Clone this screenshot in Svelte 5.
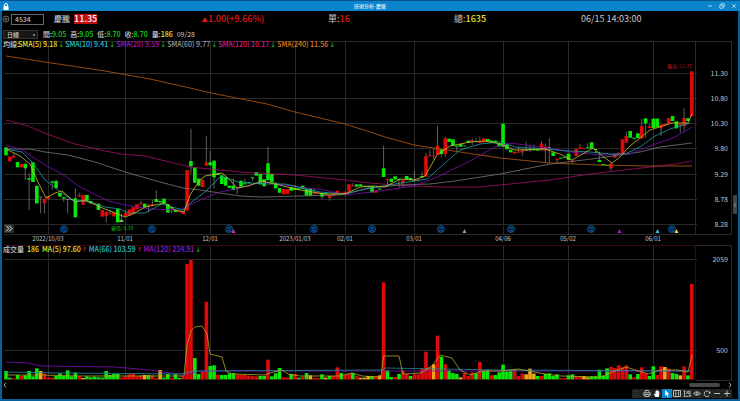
<script lang="ts">
	interface Bar {
		x: number;
		color: string;
		top: number;
		bottom: number;
		high: number;
		low: number;
	}

	let code = $state('4534');
	let period = $state('日線');
	let tool = $state('cursor');

	const STEP = 3.853;
	const COLORS: Record<string, string> = { r: '#e00808', g: '#08e808', y: '#f0a818', w: '#999' };

	// color, body top, body bottom, high, low (thirds of a pixel, 0 = no wick)
	const candleData = `g 292 316 0 0;r 320 334 0 0;r 318 323 310 0;g 336 352 0 0;r 342 352 0 0;g 342 355 338 390;
g 385 389 370 480;g 337 396 0 0;g 408 460 405 0;w 440 442 0 490;r 446 460 0 490;r 438 446 0 450;g 394 398 392 420;
g 393 414 388 416;g 429 440 0 0;g 442 446 0 455;w 447 449 0 490;w 447 449 0 0;g 445 502 415 0;r 436 440 428 0;
r 436 464 0 0;g 435 452 0 0;g 453 460 0 0;r 458 460 0 0;g 461 480 0 0;r 480 500 0 0;r 485 498 0 518;r 490 493 480 0;
r 487 499 0 0;g 477 517 0 0;g 511 516 490 0;r 489 498 480 0;r 478 496 0 0;r 472 492 0 0;r 462 478 0 0;r 460 463 452 0;
g 461 472 0 0;r 463 467 0 487;r 463 467 450 0;g 447 456 420 0;g 453 457 0 0;g 446 460 0 0;g 462 488 0 0;
g 472 475 0 490;g 480 486 0 0;r 484 487 0 0;r 485 492 0 0;r 360 482 0 0;g 333 349 236 370;g 352 398 0 0;g 386 407 0 0;
r 389 411 0 0;r 337 347 258 0;g 337 346 303 0;g 332 382 0 415;g 370 375 0 0;g 376 402 0 0;g 381 407 0 0;g 407 414 0 0;
g 407 420 385 0;r 412 416 0 433;g 392 410 0 0;g 400 403 385 0;g 397 400 0 0;g 382 385 0 392;g 366 377 0 0;g 372 403 0 0;
g 388 409 0 0;g 340 390 291 0;g 372 398 0 0;g 398 415 0 0;g 414 428 0 0;r 417 433 0 0;r 417 432 0 0;g 411 422 0 0;
g 414 420 405 0;g 415 419 0 0;g 407 416 0 0;g 417 437 0 0;g 416 437 0 0;r 430 433 415 0;r 428 432 0 0;g 429 440 0 447;
g 430 433 0 0;r 434 444 0 452;r 431 436 0 0;r 422 431 0 0;r 428 430 0 0;r 425 432 0 0;r 403 424 0 0;r 406 409 400 0;
g 403 410 0 0;g 403 409 0 0;g 407 409 0 0;g 407 409 0 415;g 408 427 0 0;r 421 428 0 0;g 416 419 0 0;g 355 381 287 0;
r 386 389 0 405;g 386 396 0 0;g 379 388 0 0;g 387 390 0 413;r 390 400 0 412;g 378 388 0 0;g 384 390 0 0;w 390 392 362 0;
r 388 390 0 395;g 378 382 365 0;r 319 380 310 0;r 316 319 300 0;r 317 319 296 328;r 287 314 228 0;g 298 312 0 322;
r 265 312 260 320;g 266 276 0 0;g 268 288 0 0;g 287 290 0 303;g 282 290 0 0;g 287 289 0 0;g 272 278 0 0;r 270 275 265 285;
w 273 275 265 0;r 276 279 262 0;r 265 277 0 0;g 267 275 0 0;g 272 276 0 0;g 272 277 0 0;g 280 290 0 0;g 221 290 0 0;
g 283 298 0 0;g 299 307 0 0;r 305 311 0 0;r 305 308 290 0;r 299 307 0 317;w 300 302 275 0;w 299 301 284 305;
g 298 301 284 0;g 298 302 0 0;r 281 301 273 0;r 290 302 280 338;w 292 294 265 338;g 307 318 0 0;r 326 330 0 338;
g 323 326 0 0;g 322 324 0 0;g 311 330 0 0;r 331 336 0 340;r 297 318 0 0;r 292 297 282 0;r 295 297 0 0;g 292 295 280 0;
g 277 296 0 0;g 297 300 0 310;g 330 336 305 0;g 342 346 0 0;g 345 348 0 0;r 340 355 0 362;r 311 323 0 0;r 308 312 0 0;
r 268 311 0 0;r 258 278 245 0;g 243 263 0 0;g 263 266 0 0;g 250 264 0 0;r 228 265 207 0;g 205 220 0 263;r 229 234 222 0;
g 206 234 0 0;g 206 232 0 0;r 224 235 0 258;r 222 226 0 0;r 204 222 0 0;g 198 213 0 0;g 214 235 0 0;r 223 227 0 248;
r 204 228 175 242;g 205 213 0 0;r 64 198 0 0`;

	// color followed by the top of the bar
	const volumeData = `g393 g413 r415 g405 r408 g406 g393 g409 g385 y393 r401 r413 r413 g408 g400 g408 g391 g409 g398 r409
y414 g409 g412 g410 g412 g413 g393 g405 g402 g402 r413 r409 r403 r400 r409 r406 y405 g405 r406 r414
y390 g413 g402 r414 g402 g414 r409 r72 r60 g354 g402 r395 r185 g378 g376 r404 g405 g405 g400 g399
r404 r405 r405 r407 r408 r409 g408 g408 r359 g409 g400 g384 r412 r413 g402 r402 g413 r410 g399 y406
r413 r414 g403 y413 g408 r408 r382 g399 r405 r401 g399 r408 y413 y413 y408 g408 r409 y406 r127 g391
g411 r411 g402 r392 r402 g408 r403 r403 r386 r335 r382 y373 r287 g350 r373 g391 g399 g402 y412 r399
r408 r397 g400 r366 g393 g390 r406 g405 g397 g374 g394 g391 r388 r408 r401 y403 y386 y401 g408 r408
g402 g400 g408 g403 r414 r414 g406 g403 r409 r409 y408 y412 g409 g409 g389 g408 g385 r381 r384 r376
r382 r376 g403 r412 g402 r382 r400 g408 g379 r405 r379 y381 r386 g399 g402 y406 r379 g406 r132`;

	const candles: Bar[] = candleData.split(';').map((row, i) => {
		const [c, top, bottom, high, low] = row.trim().split(' ');
		return {
			x: 6 + i * STEP,
			color: COLORS[c],
			top: 50 + +top / 3,
			bottom: 50 + +bottom / 3,
			high: 50 + (+high || +top) / 3,
			low: 50 + (+low || +bottom) / 3
		};
	});

	const volumes = volumeData.split(/\s+/).map((v, i) => ({
		x: 6 + i * STEP,
		color: COLORS[v[0]],
		top: 240 + +v.slice(1) / 3
	}));

	const priceLines = [
		{ color: '#b85a10', points: '6,56 45,62 105,71 150,79 190,88 211,93 267,104 295,112 345,124 370,132 385,137 414,145 440,149 500,158 550,163 600,165 645,166 692,166' },
		{ color: '#a80f64', points: '6,120 28,126 47,134 75,144 105,151 121,154 145,156 190,167 240,172 295,175 345,180 370,183 395,185 414,186 440,187 480,187 510,184 550,180 590,174 650,167 675,164 692,161' },
		{ color: '#777777', points: '6,149 30,149 45,152 68,155 95,162 125,172 160,182 183,188 200,190 240,196 262,197 300,196 340,195 370,188 400,185 430,184 455,181 500,174 550,164 592,159 640,152 660,147 692,143' },
		{ color: '#7a10b8', points: '6,145 22,150 45,165 62,174 80,187 108,201 125,205 150,209 180,210 200,200 220,192 235,189 262,182 300,187 325,190 345,195 380,191 414,186 435,178 470,161 495,147 510,143 540,147 570,152 600,155 630,154 650,146 675,137 692,127' },
		{ color: '#20a0a8', points: '6,149 22,152 33,163 45,180 58,190 72,200 90,202 105,207 120,209 128,213 145,213 162,204 183,210 193,201 205,192 221,176 238,182 265,184 285,184 320,192 345,194 365,189 395,184 427,179 445,163 460,150 480,144 500,142 515,147 545,149 570,151 590,152 610,154 625,154 640,147 655,136 670,129 690,123' },
		{ color: '#c8c030', points: '6,149 20,156 30,164 38,182 46,198 55,193 62,191 75,202 85,200 100,207 115,213 125,217 133,214 145,207 165,203 175,210 184,212 190,195 200,180 205,176 222,173 230,180 237,188 248,186 262,181 275,184 300,190 325,194 345,194 360,187 375,186 385,187 400,179 414,180 425,176 437,155 450,146 470,142 485,141 500,144 515,150 545,149 560,154 572,160 593,148 605,158 612,163 620,157 630,146 650,130 672,123 688,123 692,114' }
	];

	const volumeLines = [
		{ color: '#7a10b8', points: '6,362 28,363 40,366 115,367 150,370 184,375 200,371 427,371 692,371' },
		{ color: '#2888a0', points: '6,372 60,373 180,374 195,371 383,370 385,368 500,370 692,371' },
		{ color: '#b0a828', points: '6,375 40,375 80,376 184,376 187,345 191,331 195,327 202,326 207,334 210,354 222,357 226,371 232,374 265,375 270,373 282,370 288,374 300,376 340,376 352,373 362,376 381,377 383,360 384,356 399,356 403,374 421,373 432,366 440,355 452,358 460,370 470,375 482,371 500,371 518,369 545,374 560,376 600,377 615,371 626,367 648,374 660,370 678,370 688,372 692,355' }
	];

	const dates = [
		{ x: 48, label: '2022/10/03' },
		{ x: 125, label: '11/01' },
		{ x: 210, label: '12/01' },
		{ x: 295, label: '2023/01/03' },
		{ x: 345, label: '02/01' },
		{ x: 414, label: '03/01' },
		{ x: 503, label: '04/06' },
		{ x: 568, label: '05/02' },
		{ x: 653, label: '06/01' }
	];

	const prices = [
		{ y: 73, label: '11.30' },
		{ y: 98, label: '10.80' },
		{ y: 123, label: '10.30' },
		{ y: 148, label: '9.80' },
		{ y: 174, label: '9.29' },
		{ y: 199, label: '8.78' },
		{ y: 224, label: '8.28' }
	];

	const months = [64, 152, 229, 314, 372, 441, 511, 591, 672];
	const marks = [
		{ x: 233, color: '#d838a8' },
		{ x: 464, color: '#999999' },
		{ x: 619, color: '#a020d0' },
		{ x: 657, color: '#30c8e8' },
		{ x: 676, color: '#e8e040' }
	];

	const smas = [
		{ name: 'SMA(5) 9.18', color: '#e8e030' },
		{ name: 'SMA(10) 9.41', color: '#28c0d0' },
		{ name: 'SMA(20) 9.59', color: '#9818d0' },
		{ name: 'SMA(60) 9.77', color: '#999999' },
		{ name: 'SMA(120) 10.17', color: '#d81880' },
		{ name: 'SMA(240) 11.56', color: '#e07818' }
	];

	const volumeMas = [
		{ name: 'MA(5) 97.60', color: '#e8e030', up: true },
		{ name: 'MA(66) 103.59', color: '#28c0d0', up: true },
		{ name: 'MA(120) 234.91', color: '#9818d0', up: false }
	];

	const ohlc = [
		{ key: '開', value: '9.05' },
		{ key: '高', value: '9.05' },
		{ key: '低', value: '8.70' },
		{ key: '收', value: '8.70' },
		{ key: '量', value: '186', volume: true }
	];

	const tools = ['blank', 'print', 'hand', 'cursor', 'info', 'style', 'view', 'reload', 'minus', 'plus'];
</script>

<div class="window">
	<header class="titlebar">
		<svg class="lock" viewBox="0 0 6 7"><path d="M1.5 3V2a1.5 1.5 0 0 1 3 0v1" fill="none" stroke="#fff" /><rect x="0.5" y="3" width="5" height="4" fill="#fff" /></svg>
		<h1>技術分析-慶騰</h1>
		<div class="window-buttons">
			<button aria-label="minimize"><svg viewBox="0 0 6 6"><path d="M1 3h4" /></svg></button>
			<button aria-label="restore"><svg viewBox="0 0 6 6"><path d="M2 2V.8h3.2v3H4M.8 2.2H4v3H.8z" /></svg></button>
			<button aria-label="close"><svg viewBox="0 0 6 6"><path d="M1.2 1.2l3.6 3.6M4.8 1.2L1.2 4.8" /></svg></button>
		</div>
	</header>

	<div class="quote">
		<div class="symbol">
			<button class="add" aria-label="add symbol">
				<svg viewBox="0 0 8 8"><circle cx="4" cy="4" r="3" /><path d="M2.2 4h3.6M4 2.2v3.6" /></svg>
			</button>
			<input aria-label="code" bind:value={code} />
			<span class="name">慶騰</span>
			<strong class="price">11.35</strong>
		</div>
		<span class="red"><svg class="rise" viewBox="0 0 6 6"><path d="M3 1l3 5H0z" /></svg>1.00(+9.66%)</span>
		<span>單:<span class="red">16</span></span>
		<span>總:<span class="yellow">1635</span></span>
		<span>06/15 14:03:00</span>
	</div>

	<div class="bar-info">
		<select aria-label="period" bind:value={period}>
			<option>日線</option>
		</select>
		{#each ohlc as item}
			<span>{item.key}:<span class={item.volume ? 'yellow' : 'green'}>{item.value}</span></span>
		{/each}
		<span class="day">09/28</span>
	</div>

	<section class="chart">
		<svg class="plot" viewBox="2 40 736 205">
			<g class="grid">
				{#each dates as d}
					<path d="M{d.x + 0.5} 41V234" />
				{/each}
				{#each prices as p}
					<path d="M4 {p.y + 0.5}H697" />
				{/each}
				<path d="M4 41.5H731.5V234.5H4M695.5 41V234" />
			</g>

			{#each candles as c}
				<path d="M{c.x} {c.high}V{c.low}" stroke="#8a8a8a" stroke-width="0.7" />
				<rect x={c.x - 1.8} y={c.top} width="3.6" height={c.bottom - c.top} fill={c.color} />
			{/each}
			{#each priceLines as line}
				<polyline points={line.points} stroke={line.color} />
			{/each}

			{#each months as x}
				<circle cx={x} cy="229" r="3.6" class="month" />
				<text {x} y="231" class="month-text">月</text>
			{/each}
			{#each marks as m}
				<path d="M{m.x + 0.5} 229l2 4h-4z" fill={m.color} />
			{/each}

			<text x="111" y="230" class="low-text">最低: 8.30</text>
			<path d="M119 221h4M123 221l-2-1v2z" stroke="#ccc" stroke-width="0.6" />
			<text x="692" y="68" class="high-text">最高: 11.35</text>

			{#each dates as d}
				<text x={d.x} y="241" class="date">{d.label}</text>
			{/each}
			{#each prices as p}
				<text x="728" y={p.y + 3} class="axis">{p.label}</text>
			{/each}
		</svg>
		<div class="legend">
			<span class="first">均線:</span>
			{#each smas as s}
				<span style:color={s.color}>{s.name}<i class="down">↓</i></span>
			{/each}
		</div>
		<button class="expand" aria-label="expand">
			<svg viewBox="0 0 10 9"><path d="M2 1.5l3 3-3 3M5 1.5l3 3-3 3" /></svg>
		</button>
		<button class="splitter" aria-label="side panel"><svg viewBox="0 0 4 6"><path d="M3 1L1 3l2 2" /></svg></button>
	</section>

	<section class="chart">
		<svg class="plot" viewBox="2 245 736 136">
			<g class="grid">
				{#each dates as d}
					<path d="M{d.x + 0.5} 246V380" />
				{/each}
				<path d="M4 259.5H697M4 350.5H697M696 245.5H731.5V380.5H696" />
				<path d="M4 245.5H695.5V379.5H4" class="frame" />
			</g>
			{#each volumes as v}
				<rect x={v.x - 1.8} y={v.top} width="3.6" height={379.3 - v.top} fill={v.color} />
			{/each}
			{#each volumeLines as line}
				<polyline points={line.points} stroke={line.color} />
			{/each}
			<text x="728" y="262" class="axis">2059</text>
			<text x="728" y="353" class="axis">500</text>
		</svg>
		<div class="legend">
			<span>成交量</span>
			<span class="yellow">186</span>
			{#each volumeMas as m}
				<span style:color={m.color}>{m.name}<i class={m.up ? 'up' : 'down'}>{m.up ? '↑' : '↓'}</i></span>
			{/each}
		</div>
	</section>

	<div class="scroll">
		<button aria-label="scroll left"><svg viewBox="0 0 4 6"><path d="M3 0.5L1 3l2 2.5" /></svg></button>
		<div class="thumb"></div>
		<button aria-label="scroll right"><svg viewBox="0 0 4 6"><path d="M1 0.5L3 3 1 5.5" /></svg></button>
	</div>

	<footer class="toolbar">
		{#each tools as name}
			<button class:active={tool === name} aria-label={name} onclick={() => (tool = name)}>
				<svg viewBox="0 0 10 9">
					{#if name === 'print'}
						<path d="M3.2 3.5v-2h3l.8.8v1.2M2.6 6.5h-.8V3.8h6.4v2.7h-.8M3 5.5h4v2H3z" />
					{:else if name === 'hand'}
						<path d="M3.5 8L1.8 5.3l.7-.5.9.8V2.3h.7V1.6h.8v-.4h.8v.6h.8v.8h.8V6L6.6 8z" class="solid" />
					{:else if name === 'cursor'}
						<path d="M3.2 1v6l1.5-1.2 1 2.2.9-.4-1-2.2 1.8-.2z" class="solid" />
					{:else if name === 'info'}
						<path d="M1.5 1.5h7v6h-7zM3 3h1.5M3 4.5h1.5M3 6h1.5M6.5 2.5v4" />
					{:else if name === 'style'}
						<path d="M1.5 2h2M2.5 2v4.5M4 5l3-3M5 2l2 3M1.5 7.3h5M8 1.5v6M7 6.3l1 1.2 1-1.2" />
					{:else if name === 'view'}
						<path d="M1.5 4.5Q5 1 8.5 4.5 5 8 1.5 4.5z" /><circle cx="5" cy="4.5" r="1" />
					{:else if name === 'reload'}
						<path d="M7.2 6.5A2.8 2.8 0 1 1 7.8 4.5M6.5 4h1.6V2.5" />
					{:else if name === 'minus'}
						<path d="M2 4.5h6" />
					{:else if name === 'plus'}
						<path d="M2 4.5h6M5 1.5v6" />
					{:else}
						<path d="M2.5 2.5h4M2.5 6.5h4" class="faint" />
					{/if}
				</svg>
			</button>
		{/each}
	</footer>
</div>

<style>
	:global(body) {
		background: #000;
	}

	.window {
		box-sizing: border-box;
		background: #000;
		border: 2px solid #07609a;
		border-top: 1px solid #07558c;
		color: #c8c8c8;
		font-family: "Noto Sans CJK TC", "Noto Sans", sans-serif;
		font-size: 7px;
		line-height: 9px;
	}

	button {
		display: flex;
		align-items: center;
		justify-content: center;
		padding: 0;
		border: 0;
		background: none;
		cursor: pointer;
	}

	svg { display: block; }

	.titlebar {
		display: grid;
		grid-template-columns: 1fr auto 1fr;
		align-items: center;
		height: 10px;
		margin: 0 -2px;
		padding: 0 3px;
		background: #0c84cc;
	}

	.lock {
		width: 6px;
		height: 7px;
	}

	h1 {
		margin: 0;
		font-size: 5px;
		line-height: 8px;
		font-weight: 500;
		color: #d4ecfa;
	}

	.window-buttons {
		display: flex;
		justify-content: flex-end;
		gap: 6px;
	}

	.window-buttons svg {
		width: 6px;
		height: 6px;
		fill: none;
		stroke: #c8e6f8;
		stroke-width: 0.8;
	}

	.quote {
		display: grid;
		grid-template-columns: 200fr 126fr 126fr 127fr 157fr;
		align-items: center;
		height: 16px;
		font-size: 9px;
		line-height: 10px;
	}

	.symbol {
		display: flex;
		align-items: center;
	}

	.add svg {
		width: 8px;
		height: 8px;
		fill: none;
		stroke: #888;
		stroke-width: 0.8;
	}

	input {
		box-sizing: border-box;
		width: 33px;
		height: 11px;
		margin: 0 10px 0 1px;
		padding: 0 3px;
		border: 1px solid #686868;
		background: #000;
		color: #ddd;
		font: inherit;
		font-size: 7px;
	}

	.name {
		font-size: 8px;
		font-weight: 500;
	}

	.price {
		margin-left: 4px;
		background: #c00c10;
		color: #fff;
		font-weight: 500;
	}

	.rise {
		display: inline-block;
		width: 6px;
		height: 6px;
		fill: #e01818;
	}

	.red { color: #e01818; }
	.yellow { color: #e8e030; }
	.green { color: #18d818; }

	.quote .red,
	.quote .yellow { font-weight: 500; }

	.bar-info {
		display: flex;
		align-items: center;
		gap: 4px;
		height: 13px;
		padding: 1px 1px 0;
		box-sizing: border-box;
		font-weight: 500;
	}

	select {
		box-sizing: border-box;
		width: 35px;
		height: 9px;
		margin-right: 1px;
		padding: 0 3px;
		border: 1px solid #333;
		appearance: none;
		background: radial-gradient(circle at 30px 4px, #777 1px, transparent 1px) #161616;
		color: #ccc;
		font: inherit;
		font-size: 6px;
		line-height: 7px;
	}

	.day { font-weight: 400; }

	.chart { position: relative; }

	.plot {
		width: 100%;
		height: auto;
	}

	.grid path {
		fill: none;
		stroke: #2a2a2a;
	}

	.grid .frame { stroke: #360c12; }

	polyline {
		fill: none;
		stroke-width: 0.8;
	}

	text {
		font-size: 7px;
		fill: #c4c4c4;
	}

	.axis { text-anchor: end; }

	.date {
		font-size: 6px;
		text-anchor: middle;
	}

	.month {
		fill: #001428;
		stroke: #0c5ca8;
		stroke-width: 0.8;
	}

	.month-text {
		font-size: 5px;
		fill: #1878d0;
		text-anchor: middle;
	}

	.low-text {
		font-size: 5px;
		fill: #10b010;
	}

	.high-text {
		font-size: 5px;
		fill: #c01010;
		text-anchor: end;
	}

	.legend {
		position: absolute;
		top: 0;
		left: 1px;
		display: flex;
		gap: 3px;
		font-weight: 500;
		white-space: nowrap;
	}

	.legend .first { margin-right: -4px; }

	i {
		display: inline-block;
		width: 4px;
		margin-left: 1px;
		font-family: "DejaVu Sans", sans-serif;
		font-size: 7px;
		font-style: normal;
	}

	.up { color: #e01818; }
	.down { color: #18c018; }

	.expand {
		position: absolute;
		bottom: 12px;
		left: 2px;
		width: 10px;
		height: 9px;
		background: #2c2c2c;
	}

	.expand svg {
		width: 10px;
		height: 9px;
		fill: none;
		stroke: #eee;
	}

	.splitter {
		position: absolute;
		bottom: 31px;
		right: 1px;
		width: 4px;
		height: 19px;
		background: #444;
	}

	.splitter svg {
		width: 4px;
		height: 6px;
		fill: none;
		stroke: #aaa;
		stroke-width: 0.7;
	}

	.scroll {
		display: flex;
		align-items: center;
		gap: 8px;
		height: 8px;
		padding: 0 6px 0 1px;
	}

	.scroll svg {
		width: 4px;
		height: 6px;
		fill: none;
		stroke: #aaa;
	}

	.thumb {
		width: 31px;
		height: 4px;
		margin-left: auto;
		border-radius: 2px;
		background: #484848;
	}

	.toolbar {
		display: flex;
		justify-content: flex-end;
		padding: 0 6px 1px 0;
	}

	.toolbar button {
		width: 10px;
		height: 9px;
		background: #242424;
	}

	.toolbar .active { background: #0c84d0; }

	.toolbar svg {
		width: 10px;
		height: 9px;
		fill: none;
		stroke: #c8c8c8;
		stroke-width: 0.9;
	}

	.toolbar .solid {
		fill: #fff;
		stroke: none;
	}

	.toolbar .faint { stroke: #383838; }
</style>
